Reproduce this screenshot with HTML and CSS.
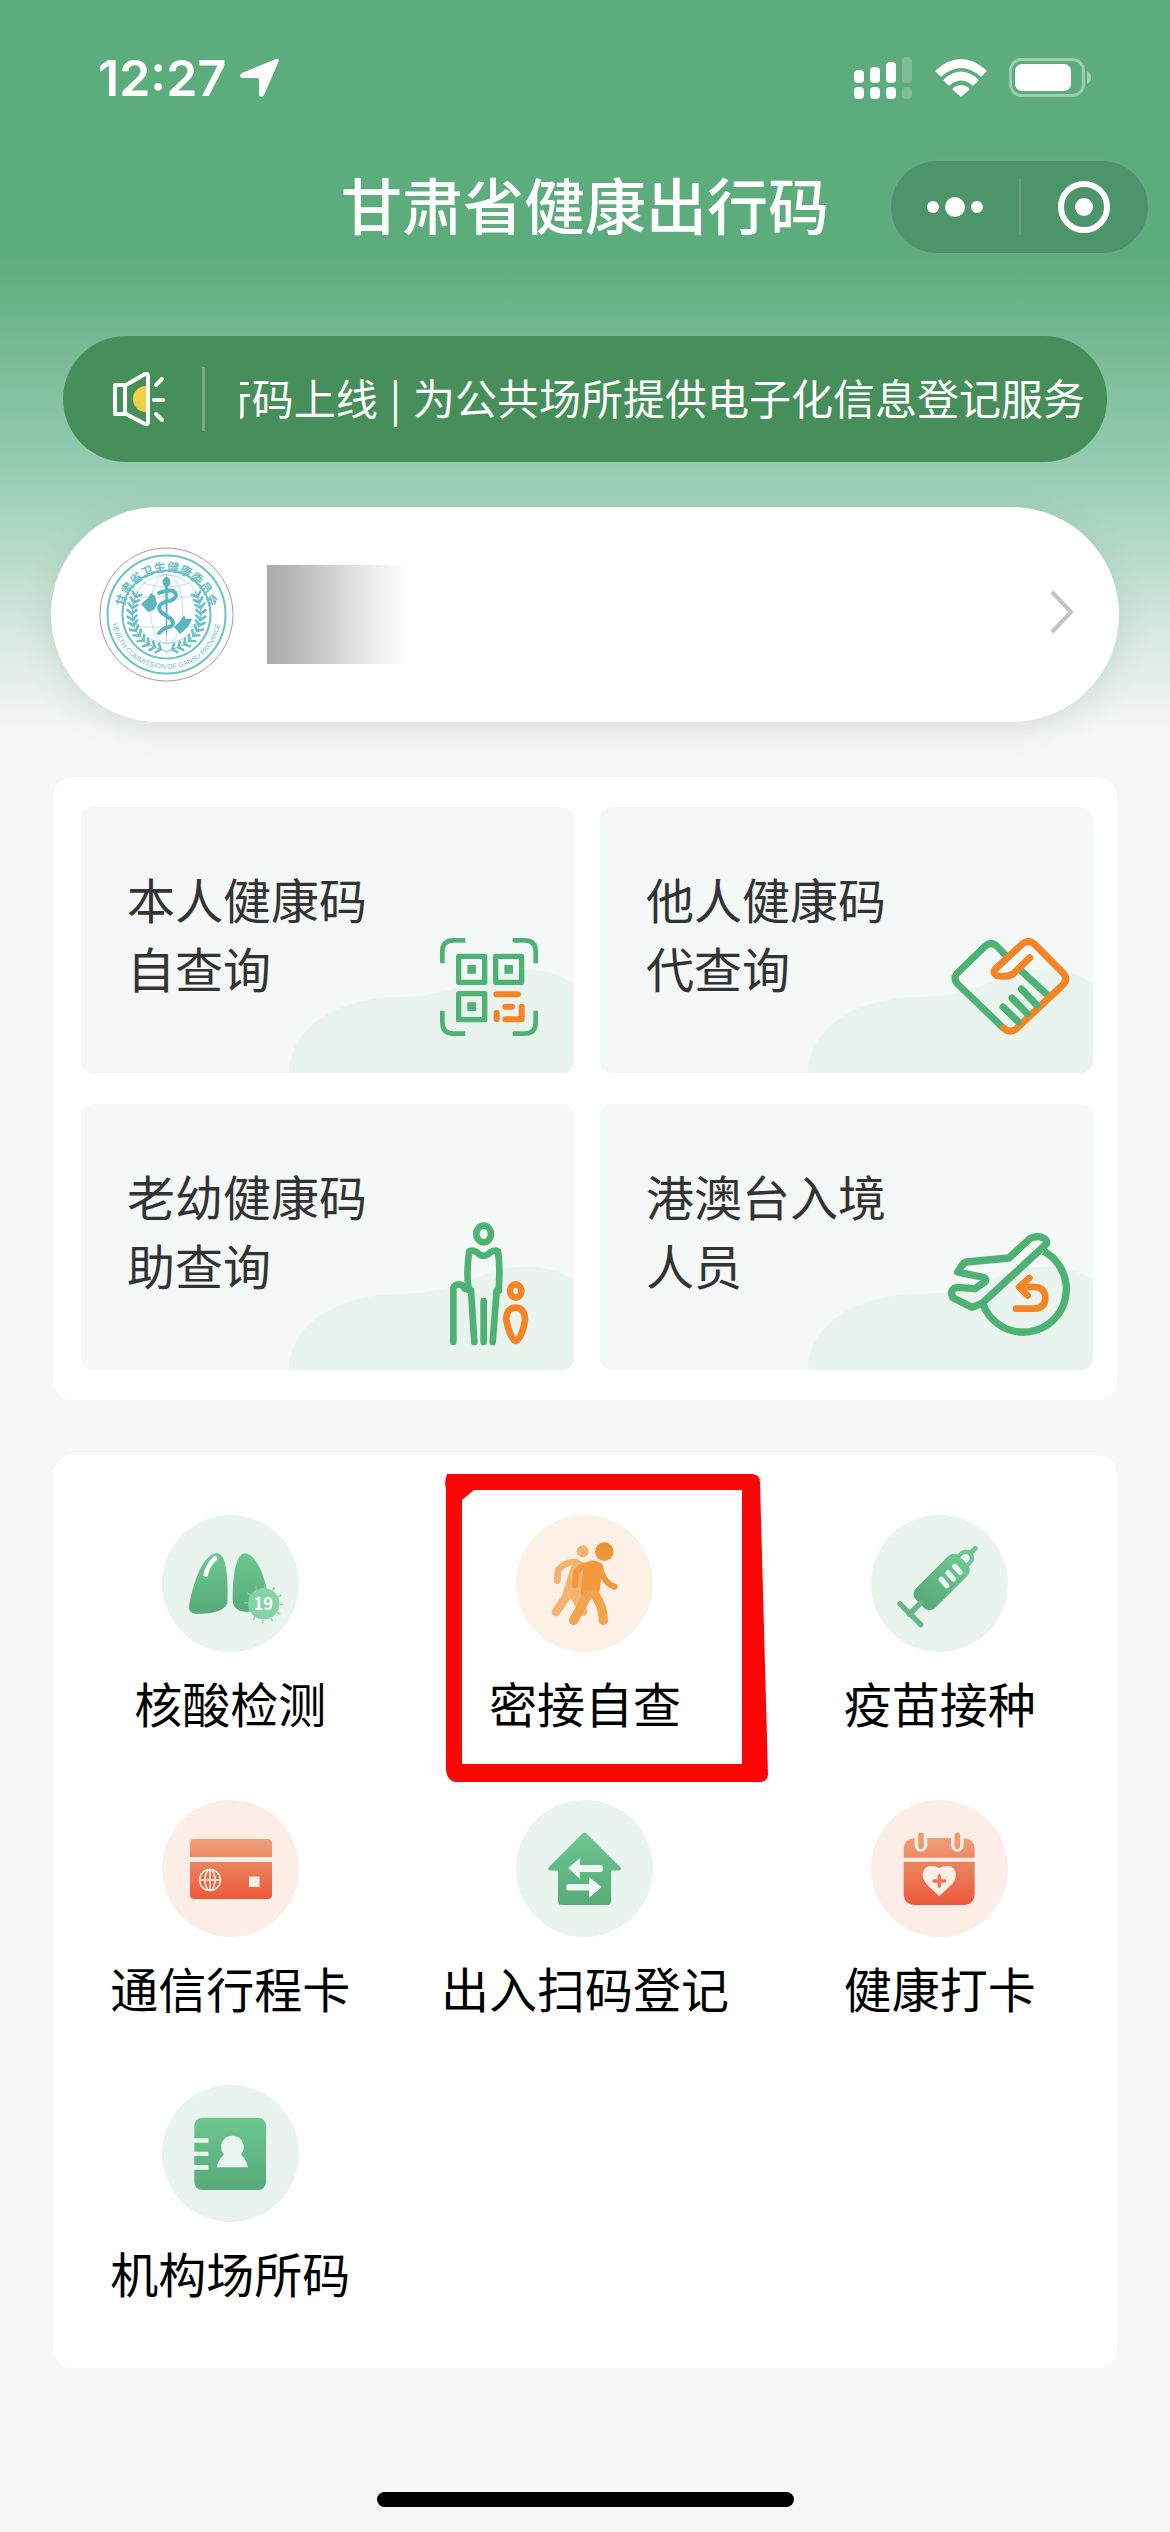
FILE: index.html
```html
<!DOCTYPE html>
<html lang="zh-CN">
<head>
<meta charset="utf-8">
<meta name="viewport" content="width=device-width, initial-scale=1">
<title>甘肃省健康出行码</title>
<link rel="stylesheet" href="styles.css">
</head>
<body>
<svg class="defs" aria-hidden="true">
  <defs>
    <linearGradient id="green" x1="0" y1="0" x2="0" y2="1"><stop offset="0" stop-color="#6cc890"/><stop offset="1" stop-color="#57aa79"/></linearGradient>
    <linearGradient id="orange" x1="0" y1="0" x2="0" y2="1"><stop offset="0" stop-color="#e8913a"/><stop offset="1" stop-color="#f09a40"/></linearGradient>
    <linearGradient id="peach" x1="0" y1="0" x2="0" y2="1"><stop offset="0" stop-color="#f0a078"/><stop offset="1" stop-color="#ec8a64"/></linearGradient>
    <linearGradient id="coral" x1="0" y1="0" x2="0" y2="1"><stop offset="0" stop-color="#ea8560"/><stop offset="1" stop-color="#ee5a3a"/></linearGradient>
  </defs>
</svg>
<div class="page">
  <div class="status">
    <div class="status-left">
      <span class="time">12:27</span>
      <svg width="40" height="40" viewBox="0 0 40 40"><path d="M37 1 Q41 0 39 5 L25 37 Q22 41 20 37 V22 Q20 20 18 20 H3 Q-1 18 3 15Z" fill="#fff"/></svg>
    </div>
    <div class="status-right">
      <svg width="59" height="42" viewBox="0 0 59 42" fill="#fff">
        <rect x="0" y="13" width="10" height="13" rx="4"/><rect x="16" y="10" width="10" height="16" rx="4"/><rect x="32" y="5" width="10" height="21" rx="4"/><rect x="48" y="0" width="10" height="26" rx="4" opacity=".2"/>
        <rect x="0" y="30" width="10" height="12" rx="4"/><rect x="16" y="30" width="10" height="12" rx="4"/><rect x="32" y="30" width="10" height="12" rx="4"/><rect x="48" y="30" width="10" height="12" rx="4" opacity=".2"/>
      </svg>
      <svg width="52" height="38" viewBox="0 0 52 38" fill="#fff">
        <path d="M1 11 Q26 -11 51 11 Q52 12 51 13 L47 17 Q46 18 45 17 Q26 1 7 17 Q6 18 5 17 L1 13 Q0 12 1 11Z"/>
        <path d="M9 20 Q26 5 43 20 Q44 21 43 22 L39 26 Q38 27 37 26 Q26 17 15 26 Q14 27 13 26 L9 22 Q8 21 9 20Z"/>
        <path d="M18 29 Q26 23 34 29 Q35 30 34 31 L27 37 Q26 38 25 37 L18 31 Q17 30 18 29Z"/>
      </svg>
      <svg width="83" height="40" viewBox="0 0 83 40">
        <rect x="1.500" y="1.500" width="73" height="36" rx="11" fill="none" stroke="#fff" stroke-opacity=".4" stroke-width="3"/>
        <rect x="6" y="6" width="56" height="27" rx="7" fill="#fff"/><path d="M78 13 Q82 15 82 19.500 T78 26Z" fill="#fff" opacity=".45"/>
      </svg>
    </div>
  </div>

  <header class="nav">
    <h1>甘肃省健康出行码</h1>
    <div class="capsule">
      <button type="button" aria-label="更多"><svg width="58" height="20" viewBox="0 0 58 20" fill="#fff"><circle cx="7" cy="10" r="6"/><circle cx="29" cy="10" r="10"/><circle cx="51" cy="10" r="6"/></svg></button>
      <button type="button" aria-label="关闭"><svg width="54" height="54" viewBox="0 0 54 54"><circle cx="27" cy="27" r="23" fill="none" stroke="#fff" stroke-width="6"/><circle cx="27" cy="27" r="9" fill="#fff"/></svg></button>
    </div>
  </header>

  <div class="notice">
    <svg width="52" height="54" viewBox="0 0 52 54">
      <path d="M33 14 A13 13 0 0 0 33 40Z" fill="#f2cf45"/>
      <g fill="none" stroke="#fff" stroke-width="4" stroke-linejoin="round" stroke-linecap="round"><path d="M2 13 H13 L32 2 Q35 1 35 4 V50 Q35 53 32 52 L13 42 H2Z M12 13 V42"/><path d="M43 13 L49 7 M41 28 H50 M43 42 L49 48"/></g>
    </svg>
    <div class="notice-window"><p>行码上线<span class="bar">|</span>为公共场所提供电子化信息登记服务</p></div>
  </div>

  <a class="profile" href="#profile" aria-label="个人信息">
    <svg width="135" height="135" viewBox="0 0 135 135">
      <defs>
        <path id="arc-top" d="M24.500 67.500 A43 43 0 0 1 110.500 67.500"/><path id="arc-bottom" d="M13 67.500 A54.500 54.500 0 0 0 122 67.500"/>
        <marker id="leaf" viewBox="-6 -6 12 12" markerWidth="12" markerHeight="12" markerUnits="userSpaceOnUse" orient="auto"><path d="M-1 0 L3 -4.500 M-1 0 L3 4.500" fill="none" stroke="#6cbfc6" stroke-width="2.600" stroke-linecap="round"/></marker>
      </defs>
      <circle cx="67.500" cy="67.500" r="66.500" fill="#fff" stroke="#a99a9a"/>
      <g fill="none" stroke="#6cc3c9">
        <circle cx="67.500" cy="67.500" r="59" stroke-width="2"/><circle cx="67.500" cy="67.500" r="44" stroke-width="2"/>
        <g stroke-width=".6" opacity=".8"><ellipse cx="67.500" cy="62" rx="16" ry="35"/><circle cx="67.500" cy="62" r="34"/><path d="M67.500 27V97 M36 50H99 M39 80H96 M44 36 Q67 44 91 36"/></g>
        <path marker-mid="url(#leaf)" d="M67.500 105 L61 102 L55 100 L49 97 L44 93 L40 88 L36.500 83 L34.500 77.500 L33.500 72 L33 66 L33.500 60 L35 54.500 L37 49 L39 44"/>
        <path marker-mid="url(#leaf)" d="M67.500 105 L74 102 L80 100 L86 97 L91 93 L95 88 L98.500 83 L100.500 77.500 L101.500 72 L102 66 L101.500 60 L100 54.500 L98 49 L96 44"/>
      </g>
      <g fill="#5bb5bf"><ellipse cx="67.500" cy="35" rx="4" ry="5"/><path d="M66 38h3l-1 50h-1z"/><path d="M42 57 l7-6 3-5 4 3 2 8 -3 6 -6 2z M75 80 l7-7 3-5 2 4 6 0 -4 8 -8 7z"/></g>
      <path d="M60 46 Q76 40 77 48 Q77 53 66 55 Q56 59 63 66 L72 72 Q78 79 66 81 L60 86" fill="none" stroke="#5bb5bf" stroke-width="4" stroke-linecap="round"/>
      <text class="seal-cn"><textPath href="#arc-top" startOffset="50%">甘肃省卫生健康委员会</textPath></text>
      <text class="seal-en"><textPath href="#arc-bottom" startOffset="50%">HEALTH COMMISSION OF GANSU PROVINCE</textPath></text>
    </svg>
    <span class="mask"></span>
    <svg class="chevron" width="26" height="50" viewBox="0 0 26 50"><path d="M3 2 L22 22 L3 42" fill="none" stroke="#c4c4c4" stroke-width="4"/></svg>
  </a>

  <main>
    <section class="card tiles">
      <a class="tile" href="#self">
        <svg class="hill" viewBox="0 0 493 266"><path d="M208 266 C208 225 250 190 320 190 C345 189 365 186 400 172 C440 156 470 162 493 176 V266Z"/></svg>
        <span class="tile-text">本人健康码<br>自查询</span>
        <svg class="tile-icon" viewBox="90 90 360 360" fill="none" stroke="#4db274" stroke-width="14">
          <path d="M127 190V155Q127 121 160 121H196 M338 121H374Q407 121 407 155V190 M127 332V367Q127 401 160 401H196 M338 401H374Q407 401 407 367V332"/>
          <g stroke-width="16" stroke-linejoin="round"><path d="M176 169H254V247H176Z M287 169H365V247H287Z M176 281H254V359H176Z"/></g>
          <g fill="#4db274" stroke="none"><path d="M202 195H228V221H202Z M313 195H339V221H313Z M202 307H228V333H202Z"/></g>
          <g stroke="#f58426" stroke-width="18" stroke-linecap="round" stroke-linejoin="round"><path d="M289 283H354 M316 320H336 M290 338V358 M316 358H365V320"/></g>
        </svg>
      </a>
      <a class="tile" href="#others">
        <svg class="hill" viewBox="0 0 493 266"><path d="M208 266 C208 225 250 190 320 190 C345 189 365 186 400 172 C440 156 470 162 493 176 V266Z"/></svg>
        <span class="tile-text">他人健康码<br>代查询</span>
        <svg class="tile-icon" viewBox="84 90 360 360" fill="none" stroke="#4db274" stroke-width="21" stroke-linejoin="round" stroke-linecap="round">
          <path d="M254 166 L228 139 Q210 122 192 139 L109 219 Q95 235 109 251 L246 383"/>
          <path d="M300 212 L378 284"/>
          <path stroke="#f58426" d="M248 384 Q266 402 286 386 L427 253 Q442 236 427 220 L340 132 Q322 116 304 132 L222 208 Q214 219 228 227 Q258 233 277 221 L326 173"/>
          <path d="M301 267 L347 315 M273 294 L319 341 M246 321 L292 365"/>
        </svg>
      </a>
      <a class="tile" href="#family">
        <svg class="hill" viewBox="0 0 493 266"><path d="M208 266 C208 225 250 190 320 190 C345 189 365 186 400 172 C440 156 470 162 493 176 V266Z"/></svg>
        <span class="tile-text">老幼健康码<br>助查询</span>
        <svg class="tile-icon" viewBox="90 111 360 360" fill="none" stroke="#4db274" stroke-width="20" stroke-linejoin="round" stroke-linecap="round">
          <ellipse cx="251" cy="132" rx="22" ry="25"/>
          <path d="M160 456 V295 Q163 283 177 283 Q188 284 193 295 L213 304 M211 304 Q200 288 203 235 Q205 195 208 184 Q220 178 231 187 Q250 208 271 187 Q284 178 294 184 Q299 220 298 260 L296 302 M213 302 L223 456 M251 333 V456 M290 302 L278 456"/>
          <g stroke="#f58426"><ellipse cx="347" cy="303" rx="17" ry="20"/><path d="M347 353 C323 353 316 376 320 395 C325 423 337 450 347 453 C358 450 370 423 374 395 C377 376 370 353 347 353Z"/></g>
        </svg>
      </a>
      <a class="tile" href="#entry">
        <svg class="hill" viewBox="0 0 493 266"><path d="M208 266 C208 225 250 190 320 190 C345 189 365 186 400 172 C440 156 470 162 493 176 V266Z"/></svg>
        <span class="tile-text">港澳台入境<br>人员</span>
        <svg class="tile-icon" viewBox="84 111 360 360" fill="none" stroke="#4db274" stroke-width="22" stroke-linejoin="round">
          <path d="M368 184 A129 129 0 1 1 187 345"/>
          <path d="M377 160 Q378 150 369 145 Q345 133 324 148 L264 204 L137 216 Q129 217 124 225 L110 246 L187 262 Q200 268 190 277 L162 296 L110 292 Q90 294 92 313 L97 324 L153 352 L183 340 L360 177Z"/>
          <g stroke="#f58426" stroke-width="20" stroke-linecap="round"><path d="M285 356 H340 Q373 354 373 323 Q372 292 340 291 H300 M325 264 L294 291 L320 317"/></g>
        </svg>
      </a>
    </section>

    <section class="card services">
      <a class="service" href="#test">
        <svg class="badge green" viewBox="68 75 411 411">
          <path d="M230 189 C258 190 268 240 264 340 C255 365 210 374 168 371 C149 368 147 358 151 338 C162 280 190 195 230 189Z M315 190 C345 190 370 240 383 300 C385 350 350 366 318 366 C290 362 279 350 280 325 C281 260 288 195 315 190Z" fill="url(#green)"/>
          <path d="M227 205 Q206 225 199 254" stroke="#fff" stroke-width="14" stroke-linecap="round" fill="none"/>
          <circle cx="373" cy="341" r="53" fill="none" stroke="#86cda3" stroke-width="11" stroke-dasharray="4 23.750"/>
          <circle cx="373" cy="341" r="47" fill="#83d4a4"/><text class="virus" x="372" y="360">19</text>
        </svg>
        <span>核酸检测</span>
      </a>
      <a class="service" href="#contact">
        <svg class="badge cream" viewBox="290 195 411 411">
          <g fill="#f5b46c" stroke="#f5b46c" stroke-linecap="round" stroke-linejoin="round"><circle cx="490" cy="304" r="18" stroke="none"/><path d="M470 337 L440 430 L490 440 L495 350Z" stroke-width="20"/><path fill="none" stroke-width="20" d="M414 392 L416 360 Q435 338 462 336"/><path fill="none" stroke-width="26" d="M445 435 L410 486 M462 432 L492 485"/></g>
          <circle cx="555" cy="305" r="28" fill="url(#orange)"/>
          <g fill="#f0993f" stroke="#f0993f" stroke-linecap="round" stroke-linejoin="round"><path d="M503 350 Q520 334 540 348 L530 430 L494 430Z" stroke-width="20"/><path fill="none" stroke-width="18" d="M467 406 L470 365 Q485 345 520 341 M542 350 Q552 400 586 410"/><path fill="none" stroke="#f4a24d" stroke-width="28" d="M505 435 L463 511 M525 432 Q551 466 552 511"/></g>
        </svg>
        <span>密接自查</span>
        <svg class="marker" width="326" height="312" viewBox="0 0 326 312"><path fill="#fe0505" fill-rule="evenodd" d="M3 2 H309 Q316 3 316 10 L324 303 Q323 310 316 310 H11 Q3 308 2 298 V17 Q0 10 3 2Z M18 28 V292 H298 V18 H30Z"/></svg>
      </a>
      <a class="service" href="#vaccine">
        <svg class="badge green" viewBox="91 75 411 411" fill="none">
          <g transform="rotate(45 308 271)"><rect x="267" y="186" width="82" height="184" rx="23" fill="url(#green)"/><path d="M308 366V415 M266 413H354" stroke="#62b985" stroke-width="16" stroke-linecap="round"/><path d="M289 190 V181 Q289 158 308 157 Q327 158 327 181 V190" stroke="#6cc68f" stroke-width="12"/><path d="M308 157V135" stroke="#6cc68f" stroke-width="15" stroke-linecap="round"/></g>
          <path d="M302 268 L318 287 M322 248 L338 267 M342 229 L358 247" stroke="#eaf6ef" stroke-width="16" stroke-linecap="round"/>
        </svg>
        <span>疫苗接种</span>
      </a>
      <a class="service" href="#travel">
        <svg class="badge rose" viewBox="0 0 137 137">
          <path d="M28 57V43Q28 39 32 39H106Q110 39 110 43V57Z" fill="url(#peach)"/><path d="M28 62H110V95Q110 99 106 99H32Q28 99 28 95Z" fill="url(#coral)"/>
          <g fill="none" stroke="#fdeee6" stroke-width="1.500"><circle cx="48" cy="80" r="10.500"/><ellipse cx="48" cy="80" rx="5" ry="10.500"/><path d="M48 69V91 M38 80H58"/></g><path d="M87 76.500H97.500V87H87Z" fill="#fdeee6"/>
        </svg>
        <span>通信行程卡</span>
      </a>
      <a class="service" href="#register">
        <svg class="badge green" viewBox="0 0 137 137">
          <path d="M66 34 Q68.500 31 71 34 L104 67 Q106 70 103 70.500 H95 V101 Q95 105 91 105 H46 Q42 105 42 101 V70.500 H34 Q31 70 33 67Z" fill="url(#green)"/>
          <g fill="#eef8f2"><path d="M52 68 L64 58V65H84Q87 65 87 68.500T84 72H64V79Z"/><path d="M85.500 87 L73 77V84H53Q50 84 50 87.300T53 90.500H73V98Z"/></g>
        </svg>
        <span>出入扫码登记</span>
      </a>
      <a class="service" href="#checkin">
        <svg class="badge rose" viewBox="91 60 411 411">
          <path d="M189 233V205Q191 176 222 174H368Q400 176 402 205V233Z" fill="url(#peach)"/><path d="M189 245H402V343Q400 373 372 375H220Q191 373 189 343Z" fill="url(#coral)"/>
          <g stroke-linecap="round"><path d="M241 172V196 M350 172V196" stroke="#fceee6" stroke-width="38"/><path d="M241 166V199 M350 166V199" stroke="#ee9a72" stroke-width="17"/></g>
          <path d="M296 349 L258 313 C235 285 250 258 271 258 Q287 258 296 264 Q305 258 321 258 C343 258 357 287 334 313Z" fill="#fdeee6"/><path d="M296 287V319 M280 303H312" stroke="#ec7752" stroke-width="10" stroke-linecap="round"/>
        </svg>
        <span>健康打卡</span>
      </a>
      <a class="service" href="#venue">
        <svg class="badge green" viewBox="188 45 411 411">
          <rect x="285" y="143" width="215" height="217" rx="24" fill="url(#green)"/>
          <path d="M283 205H327V218H283Z M283 245H327V258H283Z M283 285H327V299H283Z" fill="#e9f5ee"/>
          <circle cx="399" cy="231" r="34" fill="#e9f5ee"/><path d="M376 252 H423 Q440 265 446 292 H352 Q358 265 376 252Z" fill="#e9f5ee"/>
        </svg>
        <span>机构场所码</span>
      </a>
    </section>
  </main>
  <div class="home-indicator"></div>
</div>
</body>
</html>
```

FILE: styles.css
```css
* { box-sizing: border-box; }

body {
  margin: 0;
  background: #f7f7f7;
  color: #000;
  font-family: "Noto Sans CJK SC", "Noto Sans", sans-serif;
}

a { color: inherit; text-decoration: none; }
svg { display: block; flex: none; }
.defs { position: absolute; width: 0; height: 0; }

.page {
  display: flex;
  flex-direction: column;
  min-height: 100vh;
  background: linear-gradient(#5dac7c 0, #5dac7c 256px, #9dd0b8 490px, #d6e8de 630px, #f7f7f7 736px);
}

.status {
  display: flex;
  justify-content: space-between;
  align-items: center;
  padding: 54px 78px 0 98px;
}
.status-left { display: flex; align-items: center; gap: 13px; }
.status-right { display: flex; align-items: center; gap: 22px; }
.time {
  color: #fff;
  font: 600 50px/48px Inter, sans-serif;
}

.nav {
  display: grid;
  grid-template-columns: 1fr auto 1fr;
  align-items: center;
  margin-top: 57px;
  padding: 0 20px;
}
.nav h1 {
  grid-column: 2;
  margin: 0;
  padding-bottom: 6px;
  color: #fff;
  font-size: 61px;
  font-weight: 500;
  line-height: 90px;
}
.capsule {
  justify-self: end;
  display: flex;
  width: 261px;
  height: 96px;
  padding: 18px 0;
  border: 2px solid #68a884;
  border-radius: 48px;
  background: #4e946a;
}
.capsule button {
  flex: 1;
  display: grid;
  place-items: center;
  padding: 0;
  border: 0;
  background: none;
}
.capsule button + button { border-left: 2px solid #67a480; }

.notice {
  display: flex;
  align-items: center;
  margin: 81px 63px 0;
  padding: 31px 22px 31px 50px;
  border-radius: 63px;
  background: #468f5b;
  color: #fff;
}
.notice-window {
  flex: 1;
  display: flex;
  align-items: center;
  min-width: 0;
  margin-left: 37px;
  border-left: 3px solid #73ae83;
}
.notice-window p {
  display: flex;
  justify-content: flex-end;
  width: 100%;
  margin: 0 0 0 35px;
  padding-bottom: 4px;
  overflow: hidden;
  font-size: 42px;
  line-height: 60px;
  white-space: nowrap;
}
.bar { padding: 0 12px; }

.profile {
  display: flex;
  align-items: center;
  margin: 45px 51px 0;
  padding: 40px 44px 40px 48px;
  border-radius: 108px;
  background: #fff;
  box-shadow: 0 8px 32px rgba(70, 110, 100, .15);
}
.mask {
  width: 144px;
  height: 99px;
  margin-left: 33px;
  background: linear-gradient(90deg, #a9a9a9, #c6c6c6 34%, #e8e8e8 68%, #fff);
}
.chevron { margin-left: auto; }
.seal-cn, .seal-en { fill: #6cbfc6; text-anchor: middle; }
.seal-cn { font-size: 12px; font-weight: 700; }
.seal-en { font: 7px "Liberation Sans", sans-serif; }

.card {
  display: grid;
  margin: 55px 53px 0;
  border-radius: 20px;
  background: #fff;
}

.tiles {
  grid-template-columns: 1fr 1fr;
  gap: 31px 26px;
  padding: 30px 24px 30px 28px;
}
.tile {
  position: relative;
  display: flex;
  justify-content: space-between;
  align-items: flex-end;
  padding: 57px 24px 23px 46px;
  overflow: hidden;
  border-radius: 12px;
  background: #f4f8f7;
  color: #333;
}
.hill {
  position: absolute;
  right: 0;
  bottom: 0;
  width: 100%;
  fill: #eaf4ee;
}
.tile-text {
  position: relative;
  padding-bottom: 48px;
  font-size: 48px;
  line-height: 69px;
}
.tile-icon {
  position: relative;
  width: 120px;
  height: 120px;
  overflow: visible;
}

.services {
  grid-template-columns: repeat(3, 1fr);
  row-gap: 64px;
  padding: 60px 0 62px;
}
.service {
  position: relative;
  display: flex;
  flex-direction: column;
  align-items: center;
  gap: 16px;
  font-size: 48px;
  line-height: 68px;
}
.badge {
  width: 137px;
  height: 137px;
  border-radius: 50%;
}
.green { background: #e9f4ee; }
.cream { background: #fdf1e5; }
.rose { background: #fceee6; }
.virus {
  fill: #fff;
  font-size: 50px;
  font-weight: 700;
  text-anchor: middle;
}
.marker {
  position: absolute;
  top: -43px;
  left: 36px;
}

.home-indicator {
  align-self: center;
  width: 417px;
  height: 15px;
  margin: auto 0 25px;
  border-radius: 8px;
  background: #000;
}
```
